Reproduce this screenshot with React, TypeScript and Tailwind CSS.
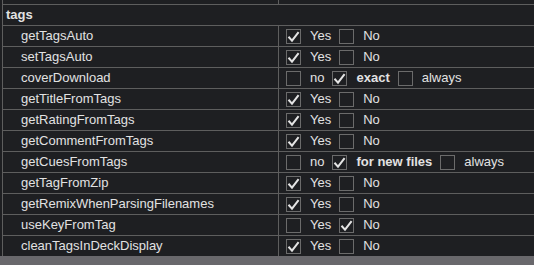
type Opt = { label: string; checked?: boolean; bold?: boolean };
type Row = { name: string; options: Opt[] };

const yesNo = (yes: boolean): Opt[] => [
  { label: "Yes", checked: yes },
  { label: "No", checked: !yes },
];

const rows: Row[] = [
  { name: "getTagsAuto", options: yesNo(true) },
  { name: "setTagsAuto", options: yesNo(true) },
  {
    name: "coverDownload",
    options: [
      { label: "no" },
      { label: "exact", checked: true, bold: true },
      { label: "always" },
    ],
  },
  { name: "getTitleFromTags", options: yesNo(true) },
  { name: "getRatingFromTags", options: yesNo(true) },
  { name: "getCommentFromTags", options: yesNo(true) },
  {
    name: "getCuesFromTags",
    options: [
      { label: "no" },
      { label: "for new files", checked: true, bold: true },
      { label: "always" },
    ],
  },
  { name: "getTagFromZip", options: yesNo(true) },
  { name: "getRemixWhenParsingFilenames", options: yesNo(true) },
  { name: "useKeyFromTag", options: yesNo(false) },
  { name: "cleanTagsInDeckDisplay", options: yesNo(true) },
];

const Checkbox = ({ checked }: { checked?: boolean }) => (
  <div className="w-[15px] h-[15px] border border-[#6b6b6b] bg-[#1e1f22] shrink-0 flex items-center justify-center">
    {checked && (
      <svg width="13" height="13" viewBox="0 0 13 13">
        <path
          d="M1.5 6.8 L5 10.6 L11.6 2.2"
          fill="none"
          stroke="#e4e4e4"
          strokeWidth="2"
        />
      </svg>
    )}
  </div>
);

export default function App() {
  return (
    <div
      className="w-full h-[265px] bg-[#1e1f22] text-[#e2e2e2] text-[13px] leading-[20px] flex flex-col overflow-hidden"
      style={{ fontFamily: '"Liberation Sans", Arial, sans-serif' }}
    >
      {/* tail of the previous row */}
      <div className="flex h-[4px] ml-[2px] border-l border-[#5e5e5e]">
        <div className="w-[276px] border-r border-[#5e5e5e]" />
      </div>

      <div className="ml-[2px] border-l border-t border-[#5e5e5e] h-[21px] pl-[3px] font-bold">
        tags
      </div>

      {rows.map((r) => (
        <div
          key={r.name}
          className="flex ml-[2px] border-l border-t border-[#5e5e5e] h-[21px]"
        >
          <div className="w-[276px] border-r border-[#5e5e5e] pl-[18px] whitespace-nowrap">
            {r.name}
          </div>
          <div className="flex items-center pl-[7px] whitespace-nowrap">
            {r.options.map((o, i) => (
              <div key={i} className="flex items-center">
                <Checkbox checked={o.checked} />
                <span className={`ml-[9px] mr-[8px] ${o.bold ? "font-bold" : ""}`}>
                  {o.label}
                </span>
              </div>
            ))}
          </div>
        </div>
      ))}

      <div className="flex-1 bg-[#69686c]" />
    </div>
  );
}
